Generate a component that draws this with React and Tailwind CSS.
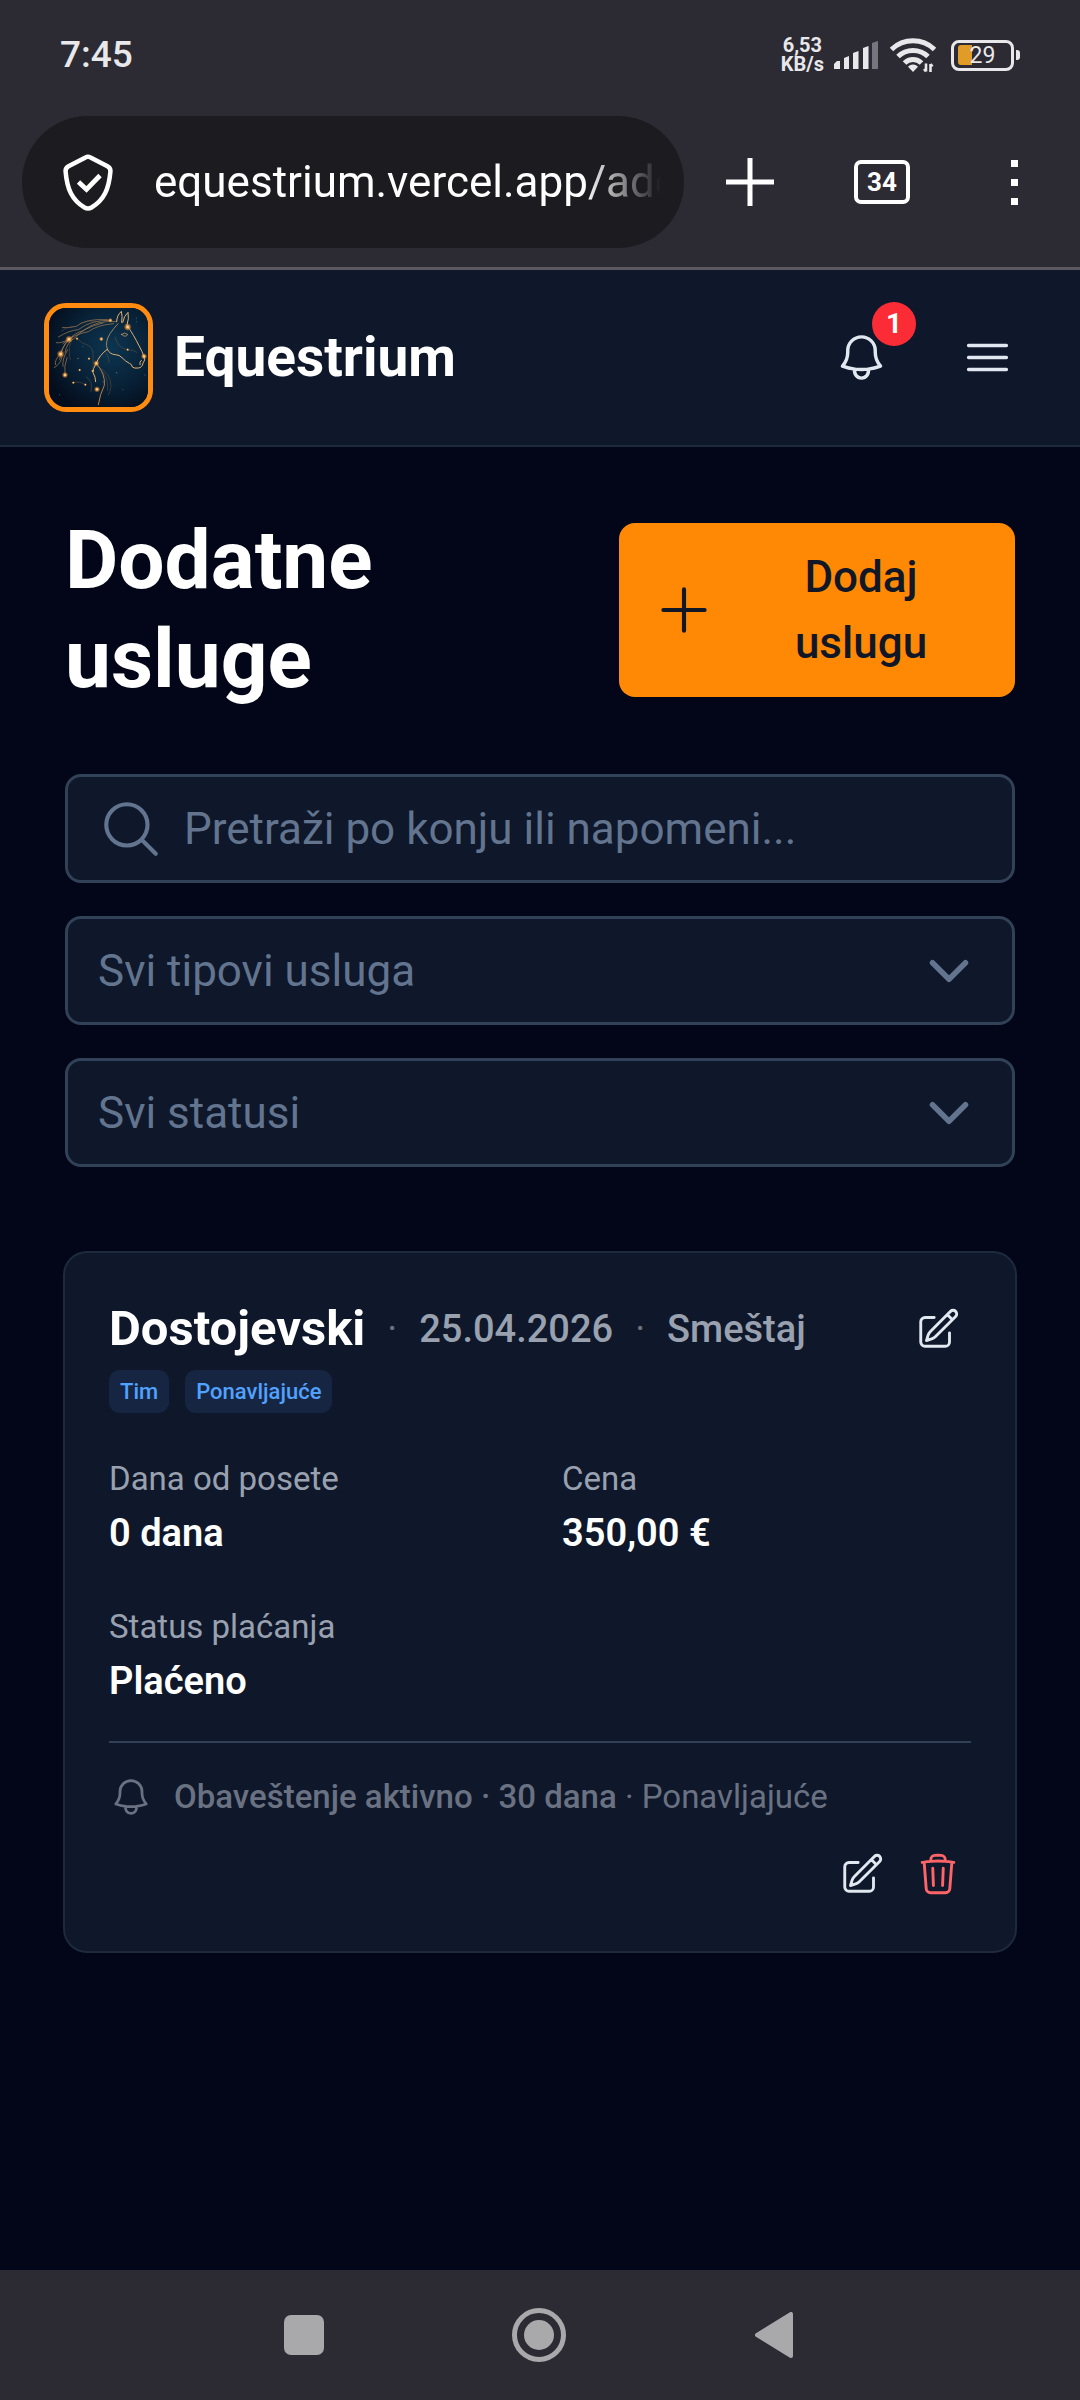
import {
  HiOutlineBars3,
  HiOutlineBell,
  HiOutlineMagnifyingGlass,
  HiOutlinePencilSquare,
  HiOutlinePlus,
  HiOutlineTrash,
} from 'react-icons/hi2';

function SignalIcon() {
  return (
    <svg width="44" height="28" viewBox="0 0 44 28" fill="#e8e8ea" aria-hidden="true">
      <path d="M0 28v-5l3-3h3v8z" />
      <path d="M10 28V17l5-2v13z" />
      <path d="M19 28V12l5.500-2v18z" />
      <path d="M29 28V7l5.500-2v23z" />
      <path d="M38 28V2l6-2v28z" fill="#77757d" />
    </svg>
  );
}

function WifiIcon() {
  return (
    <svg width="46" height="36" viewBox="0 0 46 36" fill="none" stroke="#e8e8ea" strokeWidth="5" aria-hidden="true">
      <path d="M1.500 12.500a31 31 0 0 1 43 0" />
      <path d="M8 19.500a21.500 21.500 0 0 1 30 0" />
      <path d="M14.500 26a12 12 0 0 1 17 0" />
      <path d="M23 27.500c2.500 0 4 1 5 2.300L23 35l-5-5.200c1-1.300 2.500-2.300 5-2.300z" fill="#e8e8ea" stroke="none" />
      <path d="M36 26.500v8M34 32l2 2.500M40.500 35v-8M42.500 29.500l-2-2.500" strokeWidth="2.600" />
    </svg>
  );
}

function Battery() {
  return (
    <div className="flex items-center gap-[2px]">
      <div className="relative flex h-[31px] w-[63px] items-center justify-center rounded-[8px] border-[3px] border-[#e8e8ea] text-[23px] leading-none text-[#e8e8ea]">
        <span className="absolute top-[2px] left-[4px] h-[20px] w-[14px] rounded-l-[3px] bg-[#e19c27]" />
        <span className="relative">29</span>
      </div>
      <span className="h-[10px] w-[4px] rounded-r-[3px] bg-[#e8e8ea]" />
    </div>
  );
}

function ShieldIcon() {
  return (
    <svg className="shrink-0" width="50" height="57" viewBox="0 0 50 57" fill="none" stroke="#fff" strokeWidth="4.500" aria-hidden="true">
      <path d="M22.500 3.400Q25 2 27.500 3.400L44.500 12.300Q47.700 14 47.400 17.500C46 35 41 46 28.500 53.500Q25 55.500 21.500 53.500C9 46 4 35 2.600 17.500Q2.300 14 5.500 12.300Z" strokeLinejoin="round" />
      <path d="M15.500 28l8 7.500L37 21.500" strokeWidth="4.800" />
    </svg>
  );
}

function StatusBar() {
  return (
    <div className="flex h-[110px] items-center justify-between px-[60px]">
      <span className="text-[37px] font-medium text-[#e8e8ea]">7:45</span>
      <div className="flex items-center gap-[10px]">
        <div className="text-center text-[20px] leading-[19px] font-bold text-[#e8e8ea]">
          <div>6,53</div>
          <div>KB/s</div>
        </div>
        <SignalIcon />
        <div className="pl-[2px]">
          <WifiIcon />
        </div>
        <div className="pl-[5px]">
          <Battery />
        </div>
      </div>
    </div>
  );
}

function BrowserBar() {
  return (
    <div className="flex items-center pt-[6px] pb-[19px] pl-[22px]">
      <div className="flex h-[132px] min-w-0 flex-1 items-center rounded-full bg-[#1c1b20] pr-[18px] pl-[41px]">
        <ShieldIcon />
        <input
          aria-label="Adresa"
          readOnly
          value="equestrium.vercel.app/additional-services"
          className="ml-[41px] min-w-0 flex-1 bg-transparent text-[44px] text-white outline-none [mask-image:linear-gradient(to_right,black_84%,transparent_99%)]"
        />
      </div>
      <button aria-label="Nova kartica" className="flex h-[132px] w-[132px] items-center justify-center">
        <svg width="48" height="48" viewBox="0 0 48 48" stroke="#fff" strokeWidth="5" aria-hidden="true">
          <path d="M24 0v48M0 24h48" />
        </svg>
      </button>
      <button aria-label="Otvorene kartice" className="flex h-[132px] w-[132px] items-center justify-center">
        <span className="flex h-[44px] w-[56px] items-center justify-center rounded-[7px] border-4 border-white text-[26px] leading-none font-bold text-white">
          34
        </span>
      </button>
      <button aria-label="Meni pregledača" className="flex h-[132px] w-[132px] flex-col items-center justify-center gap-[12px]">
        <span className="h-[7px] w-[7px] bg-white" />
        <span className="h-[7px] w-[7px] bg-white" />
        <span className="h-[7px] w-[7px] bg-white" />
      </button>
    </div>
  );
}

const STARS = [
  [88, 119, 5],
  [63, 163, 5],
  [76, 226, 4],
  [172, 269, 4],
  [212, 62, 3],
  [264, 82, 5],
  [313, 170, 4],
  [185, 118, 3],
  [170, 191, 4],
  [101, 249, 2],
  [137, 255, 2],
  [120, 211, 2],
  [148, 177, 2],
  [264, 150, 2],
  [112, 117, 2],
  [159, 214, 2],
  [115, 177, 1],
];

function HorseLogo() {
  return (
    <svg
      className="h-[109px] w-[109px] rounded-[22px] border-[5px] border-[#ff8c10]"
      viewBox="28 25 297 297"
      fill="none"
      strokeLinecap="round"
      strokeLinejoin="round"
      role="img"
      aria-label="Equestrium logo"
    >
      <defs>
        <radialGradient id="sky" cx="0.62" cy="0.4" r="0.7">
          <stop offset="0" stopColor="#0d3550" />
          <stop offset="0.55" stopColor="#082238" />
          <stop offset="1" stopColor="#040d1c" />
        </radialGradient>
        <radialGradient id="glow">
          <stop offset="0" stopColor="#fff1cf" />
          <stop offset="0.25" stopColor="#ffb45c" />
          <stop offset="1" stopColor="#ff8a1c" stopOpacity="0" />
        </radialGradient>
      </defs>
      <rect x="28" y="25" width="297" height="297" fill="url(#sky)" />
      <g stroke="#e3b072" strokeWidth="3">
        <path d="M231 66q0-18 14-31q4 14 1 33M249 68q4-20 16-30q4 18-3 38" />
        <path d="M262 78C276 96 288 118 298 138Q308 156 313 170" />
        <path d="M313 170q6 12-3 20q-2 14-14 15q-12 2-18-3q-1-9-9-11q-12-6-22-17q-8-9-20-9q-17-1-24-16" />
        <path d="M305 182q-7 4-4 13" />
        <path d="M203 149q-24 17-33 42q-11 16-10 28q8 13 8 27" />
        <path d="M170 191q28 32 24 66q-13 26-18 58" stroke="#b87f4c" />
        <path d="M203 149q-8-22 8-47q12-17 24-30" strokeWidth="2" />
        <path d="M246 104q9-8 18 0q-6 12-18 0z" strokeWidth="2" />
      </g>
      <g stroke="#c08d56" strokeWidth="1.800">
        <path d="M231 66q-58-6-99 26q-30 10-44 27" />
        <path d="M222 72q-50 4-76 24q-44 8-76 36" />
        <path d="M214 62q-60-2-98 28q-28 2-60 22" />
        <path d="M205 60q-70-4-95 20q-26 6-42 4" />
        <path d="M190 70q-60 14-84 44q-24 14-30 44" />
        <path d="M88 119q-28 14-38 10M88 119q-24 22-28 60M100 110q-28 20-37 53M63 163q-18 14-16 32M68 168q-4 24-24 36M76 226q-4-28 6-52M84 150q-18 30-14 50" />
      </g>
      <g stroke="#7a5e48" strokeWidth="1.300">
        <path d="M112 117q16 16 34 20q18 10 14 40q2 20-1 37M140 232q22 12 14 44M172 200q42 18 42 60q-2 18-8 26M178 206q30 22 26 66M101 249q18-6 36 6M226 112q8 34 38 38q18 0 28 8M200 160q10 20 8 28" />
        <path d="M92 130q-6 30 0 50M100 80q-20 2-34 14M120 74q24-14 60-8" />
      </g>
      {STARS.map(([x, y, r]) => (
        <g key={`${x}-${y}`}>
          <circle cx={x} cy={y} r={r * 2.4} fill="url(#glow)" />
          <circle cx={x} cy={y} r={r * 0.6} fill="#ffd79a" />
        </g>
      ))}
      <g fill="#3d7ca5">
        <circle cx="290" cy="55" r="1.500" />
        <circle cx="291" cy="66" r="1.500" />
        <circle cx="231" cy="219" r="2" />
        <circle cx="190" cy="246" r="1.500" />
        <circle cx="60" cy="285" r="1.500" />
        <circle cx="250" cy="270" r="1.500" />
        <circle cx="130" cy="140" r="1.500" />
        <circle cx="316" cy="226" r="1.500" />
      </g>
    </svg>
  );
}

function AppHeader() {
  return (
    <header className="flex h-[177px] items-center justify-between border-b-2 border-slate-800 bg-slate-900 pr-[43px] pl-[44px]">
      <a href="#" className="flex items-center gap-[21px]">
        <HorseLogo />
        <span className="text-[55px] leading-[77px] font-bold text-white">Equestrium</span>
      </a>
      <div className="flex items-center gap-[27px] text-slate-200">
        <button aria-label="Obaveštenja" className="relative flex h-[99px] w-[99px] items-center justify-center">
          <HiOutlineBell size={55} />
          <span className="absolute -top-[6px] -right-[5px] flex h-[44px] w-[44px] items-center justify-center rounded-full bg-red-500 text-[28px] leading-none font-bold text-white">
            1
          </span>
        </button>
        <button aria-label="Meni" className="flex h-[99px] w-[99px] items-center justify-center">
          <HiOutlineBars3 size={55} />
        </button>
      </div>
    </header>
  );
}

function FilterSelect({ label, options }) {
  return (
    <div className="relative">
      <select
        aria-label={label}
        className="block h-[109px] w-full appearance-none rounded-[16px] border-[3px] border-slate-700 bg-slate-900 pr-[110px] pl-[30px] text-[44px] text-slate-500"
      >
        <option>{label}</option>
        {options.map((o) => (
          <option key={o}>{o}</option>
        ))}
      </select>
      <span className="pointer-events-none absolute inset-y-0 right-[33px] flex items-center text-slate-500">
        <svg width="66" height="66" viewBox="0 0 24 24" fill="none" stroke="currentColor" strokeWidth="2" strokeLinecap="round" strokeLinejoin="round" aria-hidden="true">
          <path d="M6 9l6 6 6-6" />
        </svg>
      </span>
    </div>
  );
}

function Tag({ children }) {
  return (
    <span className="rounded-[11px] bg-blue-400/10 px-[11px] py-[5px] text-[22px] leading-[33px] font-medium text-blue-400">
      {children}
    </span>
  );
}

function Field({ label, value }) {
  return (
    <div>
      <dt className="text-[33px] leading-[44px] text-gray-400">{label}</dt>
      <dd className="mt-1 text-[38px] leading-[56px] font-semibold text-white">{value}</dd>
    </div>
  );
}

function IconButton({ label, className, children }) {
  return (
    <button aria-label={label} className={`flex h-[66px] w-[66px] shrink-0 items-center justify-center ${className}`}>
      {children}
    </button>
  );
}

function ServiceCard() {
  return (
    <article className="mt-[86px] rounded-[22px] bg-slate-900 px-[44px] pt-[43px] pb-[44px] ring-2 ring-slate-800">
      <div className="flex items-start justify-between">
        <div>
          <div className="flex h-[66px] items-center gap-[22px]">
            <h2 className="text-[49px] font-bold text-white">Dostojevski</h2>
            <span className="text-[38px] text-gray-500">·</span>
            <span className="text-[38px] font-medium text-gray-400">25.04.2026</span>
            <span className="text-[38px] text-gray-500">·</span>
            <span className="text-[38px] font-medium text-gray-400">Smeštaj</span>
          </div>
          <div className="mt-2 flex gap-4">
            <Tag>Tim</Tag>
            <Tag>Ponavljajuće</Tag>
          </div>
        </div>
        <IconButton label="Izmeni posetu" className="text-slate-200">
          <HiOutlinePencilSquare size={46} />
        </IconButton>
      </div>
      <dl className="mt-[44px] grid grid-cols-2 gap-[44px]">
        <Field label="Dana od posete" value="0 dana" />
        <Field label="Cena" value="350,00 €" />
        <Field label="Status plaćanja" value="Plaćeno" />
      </dl>
      <div className="mt-8 flex items-center gap-[21px] border-t-2 border-slate-700 pt-8 text-[33px] leading-[44px] text-gray-500">
        <HiOutlineBell size={44} />
        <p>
          <span className="font-medium">Obaveštenje aktivno · 30 dana</span> · Ponavljajuće
        </p>
      </div>
      <div className="mt-[22px] flex justify-end gap-[10px]">
        <IconButton label="Izmeni" className="text-slate-200">
          <HiOutlinePencilSquare size={46} />
        </IconButton>
        <IconButton label="Obriši" className="text-red-400">
          <HiOutlineTrash size={46} />
        </IconButton>
      </div>
    </article>
  );
}

function SystemNav() {
  return (
    <nav aria-label="Sistemska navigacija" className="mt-auto flex h-[130px] justify-center bg-[#2c2a33] pr-[2px]">
      <button aria-label="Nedavno" className="flex w-[235px] items-center justify-center">
        <span className="h-[40px] w-[40px] rounded-[7px] bg-[#a9a8aa]" />
      </button>
      <button aria-label="Početna" className="flex w-[235px] items-center justify-center">
        <span className="flex h-[54px] w-[54px] items-center justify-center rounded-full border-[5px] border-[#a9a8aa]">
          <span className="h-[30px] w-[30px] rounded-full bg-[#a9a8aa]" />
        </span>
      </button>
      <button aria-label="Nazad" className="flex w-[235px] items-center justify-center">
        <svg width="38" height="46" viewBox="0 0 38 46" fill="#a9a8aa" stroke="#a9a8aa" strokeWidth="4" strokeLinejoin="round" aria-hidden="true">
          <path d="M36 2v42L2 23z" />
        </svg>
      </button>
    </nav>
  );
}

export default function App() {
  return (
    <div className="flex min-h-screen flex-col bg-slate-950 font-[Roboto,sans-serif]">
      <div className="border-b-[3px] border-[#5a5861] bg-[#2c2a33]">
        <StatusBar />
        <BrowserBar />
      </div>
      <AppHeader />
      <main className="px-[65px] pt-[64px] pb-[66px]">
        <div className="flex items-center justify-between">
          <h1 className="text-[82px] leading-[99px] font-bold text-white">Dodatne usluge</h1>
          <button className="flex w-[396px] shrink-0 items-center gap-[22px] rounded-[16px] bg-orange-400 px-8 py-[21px] text-[44px] leading-[66px] font-medium text-gray-900">
            <HiOutlinePlus className="shrink-0" size={66} />
            <span className="flex-1">Dodaj uslugu</span>
          </button>
        </div>
        <div className="mt-[65px] flex flex-col gap-[33px]">
          <label className="flex h-[109px] items-center gap-[20px] rounded-[16px] border-[3px] border-slate-700 bg-slate-900 px-[30px] text-slate-500">
            <HiOutlineMagnifyingGlass className="shrink-0" size={66} />
            <input
              type="search"
              aria-label="Pretraga usluga"
              placeholder="Pretraži po konju ili napomeni..."
              className="min-w-0 flex-1 bg-transparent text-[44px] outline-none placeholder:text-slate-500"
            />
          </label>
          <FilterSelect label="Svi tipovi usluga" options={['Smeštaj']} />
          <FilterSelect label="Svi statusi" options={['Plaćeno']} />
        </div>
        <ServiceCard />
      </main>
      <SystemNav />
    </div>
  );
}
